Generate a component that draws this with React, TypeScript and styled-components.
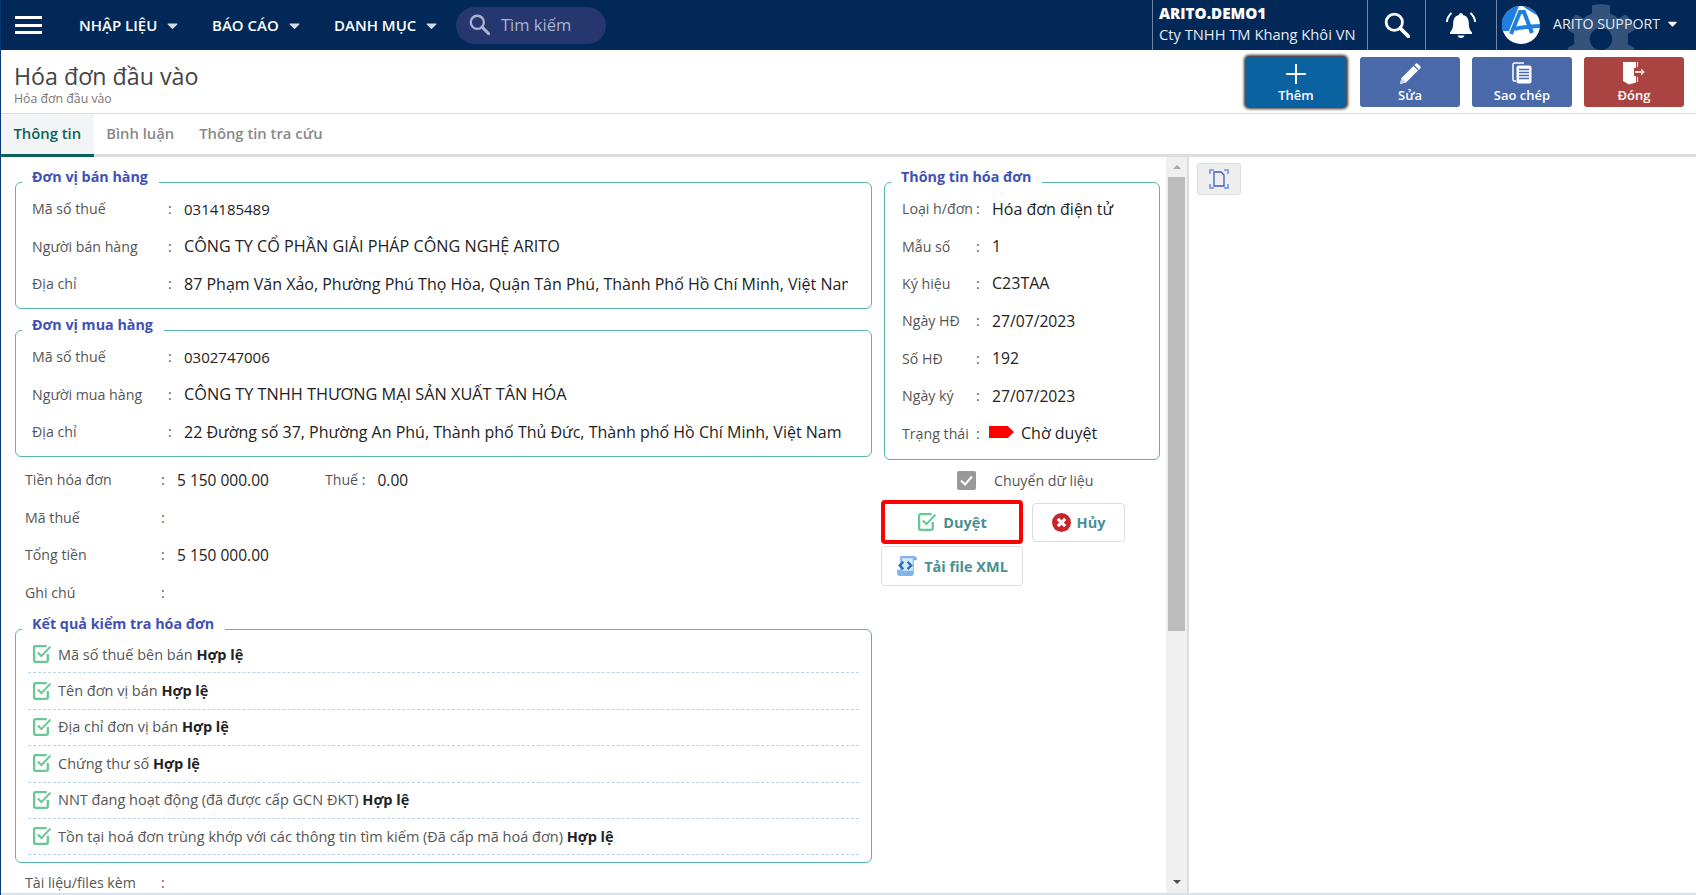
import React from 'react';
import styled, { createGlobalStyle } from 'styled-components';
import { FaCaretDown, FaCog } from 'react-icons/fa';

const GlobalStyle = createGlobalStyle`
  html, body {
    margin: 0;
    padding: 0;
    height: 100%;
    overflow: hidden;
    background: #fff;
  }
  body {
    font-family: "Open Sans", "Noto Sans", "Liberation Sans", sans-serif;
    color: #333;
  }
  * {
    box-sizing: border-box;
  }
`;

interface InfoItem {
  label: string;
  value: string;
  size?: number;
}

const sellerRows: InfoItem[] = [
  { label: 'Mã số thuế', value: '0314185489', size: 15 },
  { label: 'Người bán hàng', value: 'CÔNG TY CỔ PHẦN GIẢI PHÁP CÔNG NGHỆ ARITO', size: 16.200 },
  { label: 'Địa chỉ', value: '87 Phạm Văn Xảo, Phường Phú Thọ Hòa, Quận Tân Phú, Thành Phố Hồ Chí Minh, Việt Nam' },
];

const buyerRows: InfoItem[] = [
  { label: 'Mã số thuế', value: '0302747006', size: 15 },
  { label: 'Người mua hàng', value: 'CÔNG TY TNHH THƯƠNG MẠI SẢN XUẤT TÂN HÓA', size: 16.300 },
  { label: 'Địa chỉ', value: '22 Đường số 37, Phường An Phú, Thành phố Thủ Đức, Thành phố Hồ Chí Minh, Việt Nam' },
];

const invoiceRows: InfoItem[] = [
  { label: 'Loại h/đơn', value: 'Hóa đơn điện tử' },
  { label: 'Mẫu số', value: '1' },
  { label: 'Ký hiệu', value: 'C23TAA' },
  { label: 'Ngày HĐ', value: '27/07/2023', size: 15.700 },
  { label: 'Số HĐ', value: '192', size: 15.700 },
  { label: 'Ngày ký', value: '27/07/2023', size: 15.700 },
];

const checks: string[] = [
  'Mã số thuế bên bán',
  'Tên đơn vị bán',
  'Địa chỉ đơn vị bán',
  'Chứng thư số',
  'NNT đang hoạt động (đã được cấp GCN ĐKT)',
  'Tồn tại hoá đơn trùng khớp với các thông tin tìm kiếm (Đã cấp mã hoá đơn)',
];

const CheckIcon = ({ size = 20 }: { size?: number }) => (
  <svg width={size} height={size} viewBox="0 0 19 19" fill="none">
    <path d="M15 9.500V15.500a1.500 1.500 0 0 1-1.500 1.500H3.500A1.500 1.500 0 0 1 2 15.500V3.500A1.500 1.500 0 0 1 3.500 2H14" stroke="#68c796" strokeWidth="2.200" />
    <path d="M5.500 8l3.500 3.500L17.500 2.500" stroke="#68c796" strokeWidth="2" />
  </svg>
);

const SearchGlyph = ({ size, color }: { size: number; color: string }) => (
  <svg width={size} height={size} viewBox="0 0 24 24" fill="none">
    <circle cx="9.500" cy="9.500" r="7.500" stroke={color} strokeWidth="2.600" />
    <path d="M15 15l7.500 7.500" stroke={color} strokeWidth="3.400" strokeLinecap="round" />
  </svg>
);

const BellIcon = () => (
  <svg width="32" height="30" viewBox="0 0 32 30" fill="#fff">
    <path d="M16 3a2 2 0 0 1 2 2c4 .8 5.800 4 5.800 8 0 5 1.200 7 3.200 9.500V24H5v-1.500C7 20 8.200 18 8.200 13c0-4 1.800-7.200 5.800-8a2 2 0 0 1 2-2z" />
    <path d="M12.500 25.500h7c-.5 1.700-2 2.500-3.500 2.500s-3-.8-3.500-2.500z" />
    <path d="M6.500 3C3.800 5.500 2.200 8.500 1.800 12M25.500 3c2.700 2.500 4.300 5.500 4.700 9" fill="none" stroke="#fff" strokeWidth="2" />
  </svg>
);

const AritoLogo = () => (
  <svg width="38" height="38" viewBox="0 0 38 38">
    <circle cx="19" cy="19" r="19" fill="#fff" />
    <path d="M21 .2a19 19 0 0 1 15 9.800L24 2.500z" fill="#1f7fe0" />
    <path d="M4 7a19 19 0 0 1 13-7L7 25l-6.500 0a19 19 0 0 1 3.500-18z" fill="#1f7fe0" />
    <path d="M9 28l9-22h4l8 21M13 23c6-2 14-2.500 25-3" fill="none" stroke="#1f7fe0" strokeWidth="4" />
  </svg>
);

const PlusIcon = () => (
  <svg width="22" height="22" viewBox="0 0 22 22" stroke="#fff" strokeWidth="2">
    <path d="M11 1v20M1 11h20" />
  </svg>
);

const PencilIcon = () => (
  <svg width="22" height="22" viewBox="0 0 22 22" fill="#fff">
    <path d="M1 21l1.500-6L14.500 3l4.500 4.500L7 19.500z" />
    <path d="M15.500 2l1.500-1.500a1 1 0 0 1 1.400 0l3 3a1 1 0 0 1 0 1.400L20 7z" />
    <path d="M1 21l1.500-6 4.500 4.500z" fill="#c7d2e6" />
  </svg>
);

const CopyIcon = () => (
  <svg width="22" height="24" viewBox="0 0 22 24" fill="none" stroke="#fff">
    <path d="M5 20H3.500A1.500 1.500 0 0 1 2 18.500V3.500A1.500 1.500 0 0 1 3.500 2H13" strokeWidth="1.500" />
    <rect x="5.500" y="4.500" width="15" height="18" rx="2" fill="#fff" stroke="none" />
    <path d="M8 8.500h10M8 11.500h10M8 14.500h10M8 17.500h10" stroke="#4a69a8" strokeWidth="1.300" />
  </svg>
);

const ExitIcon = () => (
  <svg width="24" height="24" viewBox="0 0 24 24" fill="#fff">
    <path d="M1 1h13v6h-2v8h2v6.500L7 23.500 1 20z" />
    <path d="M15 1h1v5h-1zM15 16h1v5h-1z" />
    <path d="M13 10h6V7.500l4 3.500-4 3.500V12h-6z" fill="#f6d5d5" />
  </svg>
);

const ScanIcon = () => (
  <svg width="20" height="20" viewBox="0 0 20 20" fill="none">
    <path d="M5 3h7l3 3v11H5z" stroke="#3d5fb5" strokeWidth="1.300" />
    <path d="M1 5V1h4M15 1h4v4M1 15v4h4M19 15v4h-4" stroke="#6f8fe8" strokeWidth="1.600" />
  </svg>
);

const CancelIcon = () => (
  <svg width="19" height="19" viewBox="0 0 18 18">
    <circle cx="9" cy="9" r="9" fill="#c9252c" />
    <path d="M5.500 5.500l7 7M12.500 5.500l-7 7" stroke="#fff" strokeWidth="3" />
  </svg>
);

const XmlIcon = () => (
  <svg width="22" height="22" viewBox="0 0 21 21">
    <path d="M4 1h13a3 3 0 0 1 3 3v1h-3v13a2 2 0 0 1-2 2H3a2.500 2.500 0 0 1-2-2.500V14h3z" fill="#7fb5ea" />
    <path d="M6 3h10v12H6z" fill="#d6e8fa" />
    <path d="M7 6.500L3.500 10 7 13.500M11 6.500l3.500 3.500-3.500 3.500" fill="none" stroke="#1f6fc4" strokeWidth="2.200" />
  </svg>
);

const App = () => {
  const renderRows = (rows: InfoItem[]) =>
    rows.map((row) => (
      <Row key={row.label}>
        <Label $width={136}>{row.label}</Label>
        <Colon>:</Colon>
        <Value $size={row.size}>{row.value}</Value>
      </Row>
    ));

  return (
    <Page>
      <GlobalStyle />
      <Header>
        <Hamburger><span /><span /><span /></Hamburger>
        <NavItem $width={133}>NHẬP LIỆU <FaCaretDown /></NavItem>
        <NavItem $width={122}>BÁO CÁO <FaCaretDown /></NavItem>
        <NavItem $width={122}>DANH MỤC <FaCaretDown /></NavItem>
        <SearchPill>
          <SearchGlyph size={21} color="#a9b4cd" />
          <span>Tìm kiếm</span>
        </SearchPill>
        <HeaderRight>
          <Company>
            <strong>ARITO.DEMO1</strong>
            <span>Cty TNHH TM Khang Khôi VN</span>
          </Company>
          <HeaderCell $width={58}><SearchGlyph size={26} color="#fff" /></HeaderCell>
          <HeaderCell $width={71}><BellIcon /></HeaderCell>
          <UserCell>
            <GearMark><FaCog /></GearMark>
            <AritoLogo />
            <UserName>ARITO SUPPORT</UserName>
            <UserCaret><FaCaretDown /></UserCaret>
          </UserCell>
        </HeaderRight>
      </Header>

      <TitleBar>
        <TitleBlock>
          <Title>Hóa đơn đầu vào</Title>
          <Subtitle>Hóa đơn đầu vào</Subtitle>
        </TitleBlock>
        <Actions>
          <ActionButton $bg="#0a62a0" $focused><PlusIcon />Thêm</ActionButton>
          <ActionButton $bg="#4a69a8"><PencilIcon />Sửa</ActionButton>
          <ActionButton $bg="#4a69a8"><CopyIcon />Sao chép</ActionButton>
          <ActionButton $bg="#a94442"><ExitIcon />Đóng</ActionButton>
        </Actions>
      </TitleBar>

      <Tabs>
        <Tab $active>Thông tin</Tab>
        <Tab>Bình luận</Tab>
        <Tab>Thông tin tra cứu</Tab>
      </Tabs>

      <Main>
        <FormArea>
          <LeftColumn>
            <Panel>
              <Legend>Đơn vị bán hàng</Legend>
              {renderRows(sellerRows)}
            </Panel>
            <Panel>
              <Legend>Đơn vị mua hàng</Legend>
              {renderRows(buyerRows)}
            </Panel>

            <Totals>
              <PlainRow>
                <Label $width={136}>Tiền hóa đơn</Label>
                <Colon>:</Colon>
                <Value $grow={false} $size={15.500}>5 150 000.00</Value>
                <TaxLabel>Thuế :</TaxLabel>
                <Value $size={15.500}>0.00</Value>
              </PlainRow>
              <PlainRow>
                <Label $width={136}>Mã thuế</Label>
                <Colon>:</Colon>
              </PlainRow>
              <PlainRow>
                <Label $width={136}>Tổng tiền</Label>
                <Colon>:</Colon>
                <Value $size={15.500}>5 150 000.00</Value>
              </PlainRow>
              <PlainRow>
                <Label $width={136}>Ghi chú</Label>
                <Colon>:</Colon>
              </PlainRow>
            </Totals>

            <CheckPanel>
              <Legend>Kết quả kiểm tra hóa đơn</Legend>
              {checks.map((text) => (
                <CheckRow key={text}>
                  <CheckIcon />
                  <span>{text} <b>Hợp lệ</b></span>
                </CheckRow>
              ))}
            </CheckPanel>

            <PlainRow>
              <Label $width={136}>Tài liệu/files kèm</Label>
              <Colon>:</Colon>
            </PlainRow>
          </LeftColumn>

          <RightColumn>
            <InvoicePanel>
              <Legend>Thông tin hóa đơn</Legend>
              {invoiceRows.map((row) => (
                <InvoiceRow key={row.label}>
                  <Label $width={74}>{row.label}</Label>
                  <Colon>:</Colon>
                  <Value $size={row.size}>{row.value}</Value>
                </InvoiceRow>
              ))}
              <InvoiceRow>
                <Label $width={74}>Trạng thái</Label>
                <Colon>:</Colon>
                <StatusFlag />
                <Value>Chờ duyệt</Value>
              </InvoiceRow>
            </InvoicePanel>

            <TransferRow>
              <FakeCheckbox>
                <svg width="19" height="19" viewBox="0 0 19 19" fill="none">
                  <path d="M4 9.500l4 4 7-8" stroke="#fff" strokeWidth="2" />
                </svg>
              </FakeCheckbox>
              Chuyển dữ liệu
            </TransferRow>

            <ButtonRow>
              <OutlineButton $width={142} $height={44} $highlight><CheckIcon />Duyệt</OutlineButton>
              <OutlineButton $width={93} $height={39}><CancelIcon />Hủy</OutlineButton>
              <OutlineButton $width={142} $height={40}><XmlIcon />Tải file XML</OutlineButton>
            </ButtonRow>
          </RightColumn>
        </FormArea>

        <Scrollbar>
          <ArrowUp />
          <Thumb />
          <ArrowDown />
        </Scrollbar>

        <SidePanel>
          <SideButton><ScanIcon /></SideButton>
        </SidePanel>
      </Main>
      <BottomStrip />
    </Page>
  );
};

const Page = styled.div`
  width: 1696px;
  height: 895px;
  display: flex;
  flex-direction: column;
  border-left: 1px solid #0a3a75;
  overflow: hidden;
`;

const Header = styled.header`
  flex: 0 0 50px;
  display: flex;
  align-items: center;
  padding-left: 14px;
  background: #022858;
  color: #fff;
`;

const Hamburger = styled.div`
  width: 27px;
  height: 18px;
  margin-right: 37px;
  display: flex;
  flex-direction: column;
  justify-content: space-between;

  span {
    display: block;
    height: 3px;
    background: #fff;
  }
`;

const NavItem = styled.div<{ $width: number }>`
  width: ${(p) => p.$width}px;
  display: flex;
  align-items: center;
  gap: 7px;
  font-size: 15px;
  font-weight: 600;
  white-space: nowrap;

  svg {
    font-size: 17px;
    color: #d5dbe6;
  }
`;

const SearchPill = styled.div`
  width: 150px;
  height: 37px;
  padding: 0 0 2px 13px;
  display: flex;
  align-items: center;
  gap: 11px;
  border-radius: 19px;
  background: #26366f;
  color: #a9b4cd;
  font-size: 16.500px;
`;

const HeaderRight = styled.div`
  margin-left: auto;
  display: flex;
  height: 50px;
`;

const Company = styled.div`
  width: 215px;
  padding: 3px 0 0 6px;
  display: flex;
  flex-direction: column;
  border-left: 1px solid #6f86a6;
  font-size: 14.700px;
  line-height: 21px;
  white-space: nowrap;

  strong {
    font-size: 15.200px;
    font-weight: 800;
  }

  span {
    color: #e6ebf2;
  }
`;

const HeaderCell = styled.div<{ $width: number }>`
  width: ${(p) => p.$width}px;
  display: flex;
  align-items: center;
  justify-content: center;
  border-left: 1px solid #6f86a6;
`;

const UserCell = styled.div`
  position: relative;
  width: 200px;
  display: flex;
  align-items: center;
  padding-left: 5px;
  border-left: 1px solid #6f86a6;
  overflow: hidden;

  > svg {
    position: relative;
  }
`;

const GearMark = styled.div`
  position: absolute;
  left: 68px;
  top: 3px;
  font-size: 72px;
  line-height: 0;
  color: #33537d;
`;

const UserName = styled.span`
  position: relative;
  margin: 0 5px 4px 13px;
  font-size: 14.200px;
  color: #e6ebf2;
  white-space: nowrap;
`;

const UserCaret = styled.span`
  position: relative;
  margin-bottom: 3px;
  display: flex;
  font-size: 15px;
  color: #fff;
`;

const TitleBar = styled.div`
  flex: 0 0 64px;
  display: flex;
  justify-content: space-between;
  border-bottom: 1px solid #ddd;
`;

const TitleBlock = styled.div`
  padding: 11px 0 0 13px;
`;

const Title = styled.div`
  font-size: 23.200px;
  line-height: 30px;
  color: #444;
`;

const Subtitle = styled.div`
  font-size: 12.300px;
  line-height: 16px;
  color: #777;
`;

const Actions = styled.div`
  display: flex;
  gap: 12px;
  padding: 7px 12px 0 0;

  > :first-child {
    margin-right: 2px;
  }
`;

const ActionButton = styled.button<{ $bg: string; $focused?: boolean }>`
  width: 100px;
  height: 50px;
  padding: 0 0 2px;
  display: flex;
  flex-direction: column;
  align-items: center;
  justify-content: flex-end;
  border: 0;
  border-radius: 3px;
  background: ${(p) => p.$bg};
  color: #fff;
  font-family: inherit;
  font-size: 13px;
  font-weight: 600;
  line-height: 20px;
  ${(p) => p.$focused && 'box-shadow: 0 0 3px 2px #333;'}
`;

const Tabs = styled.nav`
  flex: 0 0 43px;
  display: flex;
  border-bottom: 3px solid #ddd;
`;

const Tab = styled.div<{ $active?: boolean }>`
  height: 43px;
  margin-bottom: -3px;
  padding: 0 12.500px 2px;
  display: flex;
  align-items: center;
  font-size: 14.800px;
  font-weight: 600;
  color: ${(p) => (p.$active ? '#0a6457' : '#888')};
  background: ${(p) => (p.$active ? '#f3f4f6' : 'transparent')};
  border-bottom: 3px solid ${(p) => (p.$active ? '#0a6457' : 'transparent')};
`;

const Main = styled.main`
  flex: 1;
  min-height: 0;
  display: flex;
`;

const FormArea = styled.div`
  width: 1165px;
  padding: 25px 0 0 14px;
  display: flex;
  gap: 12px;
  overflow: hidden;
`;

const LeftColumn = styled.div`
  width: 857px;
  flex: none;
`;

const RightColumn = styled.div`
  width: 276px;
  flex: none;
`;

const Panel = styled.section`
  position: relative;
  height: 127px;
  margin-bottom: 21px;
  padding: 7px 23px 0 16px;
  border: 1px solid #55b7ae;
  border-radius: 6px;
`;

const Legend = styled.div`
  position: absolute;
  top: -16px;
  left: 6px;
  padding: 0 11px 0 10px;
  background: #fff;
  color: #3f51b5;
  font-size: 14.300px;
  font-weight: 700;
  line-height: 20px;
  white-space: nowrap;
`;

const Row = styled.div`
  height: 37.500px;
  display: flex;
  align-items: center;
  font-size: 14.200px;
`;

const PlainRow = styled(Row)`
  padding-left: 10px;
`;

const Label = styled.div<{ $width: number }>`
  flex: 0 0 ${(p) => p.$width}px;
  color: #555;
  white-space: nowrap;
`;

const Colon = styled.div`
  flex: 0 0 16px;
  color: #555;
`;

const Value = styled.div<{ $grow?: boolean; $size?: number }>`
  flex: ${(p) => (p.$grow === false ? 'none' : 1)};
  min-width: 0;
  overflow: hidden;
  font-size: ${(p) => p.$size ?? 16}px;
  color: #222;
  white-space: nowrap;
`;

const TaxLabel = styled.div`
  margin: 0 12px 0 56px;
  color: #555;
`;

const Totals = styled.div`
  margin-top: -17px;
  margin-bottom: 18px;
`;

const CheckPanel = styled.section`
  position: relative;
  height: 234px;
  margin-bottom: 1px;
  padding: 7px 12px 0 12px;
  border: 1px solid #55b7ae;
  border-radius: 6px;
`;

const CheckRow = styled.div`
  height: 36.400px;
  padding: 0 0 1px 4px;
  display: flex;
  align-items: center;
  gap: 6px;
  border-bottom: 1px dashed #b9d3ea;
  font-size: 14.500px;
  color: #555;
  white-space: nowrap;

  b {
    color: #222;
  }
`;

const InvoicePanel = styled.section`
  position: relative;
  height: 278px;
  padding: 7px 8px 0 17px;
  border: 1px solid #55b7ae;
  border-radius: 6px;
`;

const InvoiceRow = styled(Row)`
  height: 37.400px;
`;

const StatusFlag = styled.span`
  flex: none;
  width: 25px;
  height: 12px;
  margin: -2px 7px 0 -3px;
  background: #f00;
  clip-path: polygon(0 0, 75% 0, 100% 50%, 75% 100%, 0 100%);
`;

const TransferRow = styled.div`
  height: 19px;
  margin: 11px 0 10px 73px;
  display: flex;
  align-items: center;
  gap: 18px;
  font-size: 14.200px;
  color: #555;
`;

const FakeCheckbox = styled.span`
  width: 19px;
  height: 19px;
  background: #999;
  border-radius: 2px;
`;

const ButtonRow = styled.div`
  margin-left: -3px;
  display: flex;
  flex-wrap: wrap;
  align-items: center;
  gap: 2px 9px;
`;

const OutlineButton = styled.button<{ $width: number; $height: number; $highlight?: boolean }>`
  width: ${(p) => p.$width}px;
  height: ${(p) => p.$height}px;
  padding: 0;
  display: flex;
  align-items: center;
  justify-content: center;
  gap: 6px;
  background: #fff;
  border: ${(p) => (p.$highlight ? '4px solid #f00' : '1px solid #ddd')};
  border-radius: 4px;
  color: #4a8f90;
  font-family: inherit;
  font-size: 14.500px;
  font-weight: 700;
`;

const Scrollbar = styled.div`
  flex: 0 0 21px;
  padding: 0 2px;
  display: flex;
  flex-direction: column;
  align-items: center;
  background: #f0f0f0;
`;

const ArrowUp = styled.div`
  flex: none;
  width: 0;
  height: 0;
  margin: 8px 0 8px;
  border: 4.500px solid transparent;
  border-top: 0;
  border-bottom-color: #a9a9a9;
`;

const Thumb = styled.div`
  flex: 0 0 454px;
  width: 100%;
  background: #bdbdbd;
`;

const ArrowDown = styled.div`
  flex: none;
  width: 0;
  height: 0;
  margin-top: auto;
  margin-bottom: 9px;
  border: 4.500px solid transparent;
  border-bottom: 0;
  border-top-color: #505050;
`;

const SidePanel = styled.aside`
  flex: 1;
  padding: 6px 8px;
  border-left: 2px solid #ddd;
`;

const SideButton = styled.div`
  width: 44px;
  height: 32px;
  display: flex;
  align-items: center;
  justify-content: center;
  background: #eee;
  border: 1px solid #ddd;
  border-radius: 3px;
`;

const BottomStrip = styled.div`
  flex: 0 0 2px;
  background: #d6e4f0;
`;

export default App;
